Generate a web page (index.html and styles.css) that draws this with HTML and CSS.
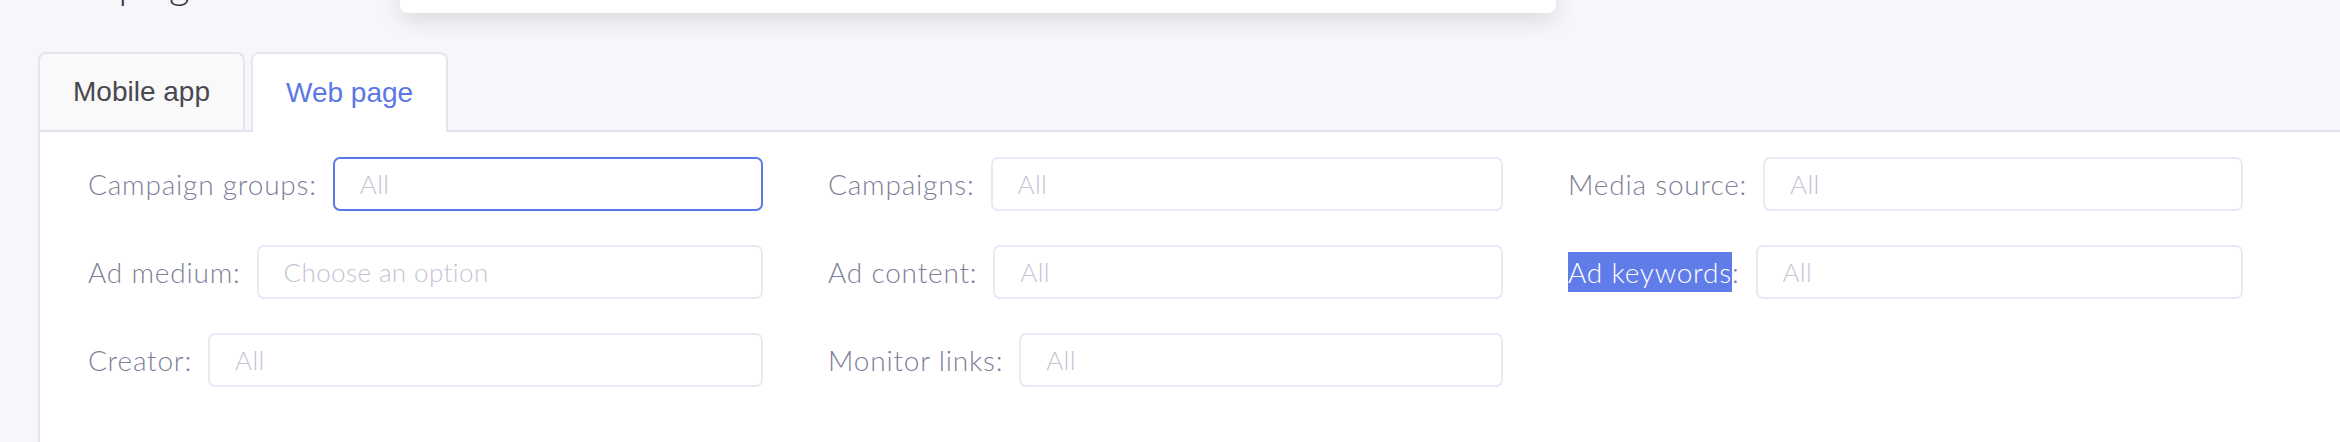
FILE: index.html
```html
<!DOCTYPE html>
<html lang="en">

<head>
    <meta charset="UTF-8">
    <meta name="viewport" content="width=device-width, initial-scale=1.0">
    <title>Campaign filters</title>
    <link rel="stylesheet" href="styles.css">
</head>

<body>

    <div id="page">
        <h1 class="page_title">Campaign filters</h1>

        <!-- open dropdown from the header, mostly scrolled out of view -->
        <div class="dropdown_menu"></div>

        <div class="tab_list">
            <div class="tab">Mobile app</div>
            <div class="tab active">Web page</div>
        </div>

        <div class="filter_panel">
            <form id="filter_form" class="filter_grid">
                <div class="input_data">
                    <label for="campaign_groups">Campaign groups:</label>
                    <input type="text" id="campaign_groups" class="focused" placeholder="All">
                </div>
                <div class="input_data">
                    <label for="campaigns">Campaigns:</label>
                    <input type="text" id="campaigns" placeholder="All">
                </div>
                <div class="input_data">
                    <label for="media_source">Media source:</label>
                    <input type="text" id="media_source" placeholder="All">
                </div>

                <div class="input_data">
                    <label for="ad_medium">Ad medium:</label>
                    <input type="text" id="ad_medium" placeholder="Choose an option">
                </div>
                <div class="input_data">
                    <label for="ad_content">Ad content:</label>
                    <input type="text" id="ad_content" placeholder="All">
                </div>
                <div class="input_data">
                    <label for="ad_keywords"><span class="selected_text">Ad keywords</span>:</label>
                    <input type="text" id="ad_keywords" placeholder="All">
                </div>

                <div class="input_data">
                    <label for="creator">Creator:</label>
                    <input type="text" id="creator" placeholder="All">
                </div>
                <div class="input_data">
                    <label for="monitor_links">Monitor links:</label>
                    <input type="text" id="monitor_links" placeholder="All">
                </div>
            </form>
        </div>
    </div>

</body>

</html>
```

FILE: styles.css
```css
*{
    box-sizing: border-box;
}

body{
    margin: 0;
    background-color: #f7f7fb;
    position: relative;
    overflow: hidden;
}

#page{
    padding-left: 38px;
}

.page_title{
    margin: -40px 0 44px 2px;
    font: 300 40px/48px Lato, sans-serif;
    color: #33333d;
}

.dropdown_menu{
    position: absolute;
    left: 400px;
    top: -200px;
    width: 1156px;
    height: 213px;
    background-color: #fff;
    border-radius: 8px;
    box-shadow: 0 8px 22px rgba(0, 0, 0, 0.11);
    z-index: 5;
}

.tab_list{
    display: flex;
    gap: 6px;
}

.tab{
    display: flex;
    align-items: center;
    height: 78px;
    padding: 0 33px;
    border: 2px solid #e4e5f0;
    border-bottom: none;
    border-radius: 8px 8px 0 0;
    background-color: #f9f9fa;
    font: 28px "Liberation Sans", Arial, sans-serif;
    color: #48484f;
}

.tab.active{
    height: 80px;
    margin-bottom: -2px;
    background-color: #fff;
    color: #5b78e6;
    position: relative;
    z-index: 1;
}

.filter_panel{
    background-color: #fff;
    border-top: 2px solid #e1e3ee;
    border-left: 2px solid #e4e5f0;
    padding: 25px 0 80px 48px;
}

.filter_grid{
    display: grid;
    grid-template-columns: repeat(3, 675px);
    column-gap: 65px;
    row-gap: 34px;
}

.input_data{
    display: flex;
    align-items: center;
    gap: 16px;
}

label{
    white-space: nowrap;
    font: 300 28px/40px Lato, sans-serif;
    letter-spacing: 0.8px;
    color: #7e7f98;
}

.selected_text{
    display: inline-block;
    background-color: #5f7ce9;
    color: #fff;
}

input{
    flex: 1;
    min-width: 0;
    height: 54px;
    padding: 0 25px;
    border: 2px solid #e7e9f5;
    border-radius: 7px;
    background-color: #fff;
    font: 300 26px Lato, sans-serif;
    letter-spacing: 0.4px;
    color: #55556a;
    outline: none;
}

input::placeholder{
    color: #c4c4d4;
}

input.focused{
    border-color: #5b79e6;
}
```
